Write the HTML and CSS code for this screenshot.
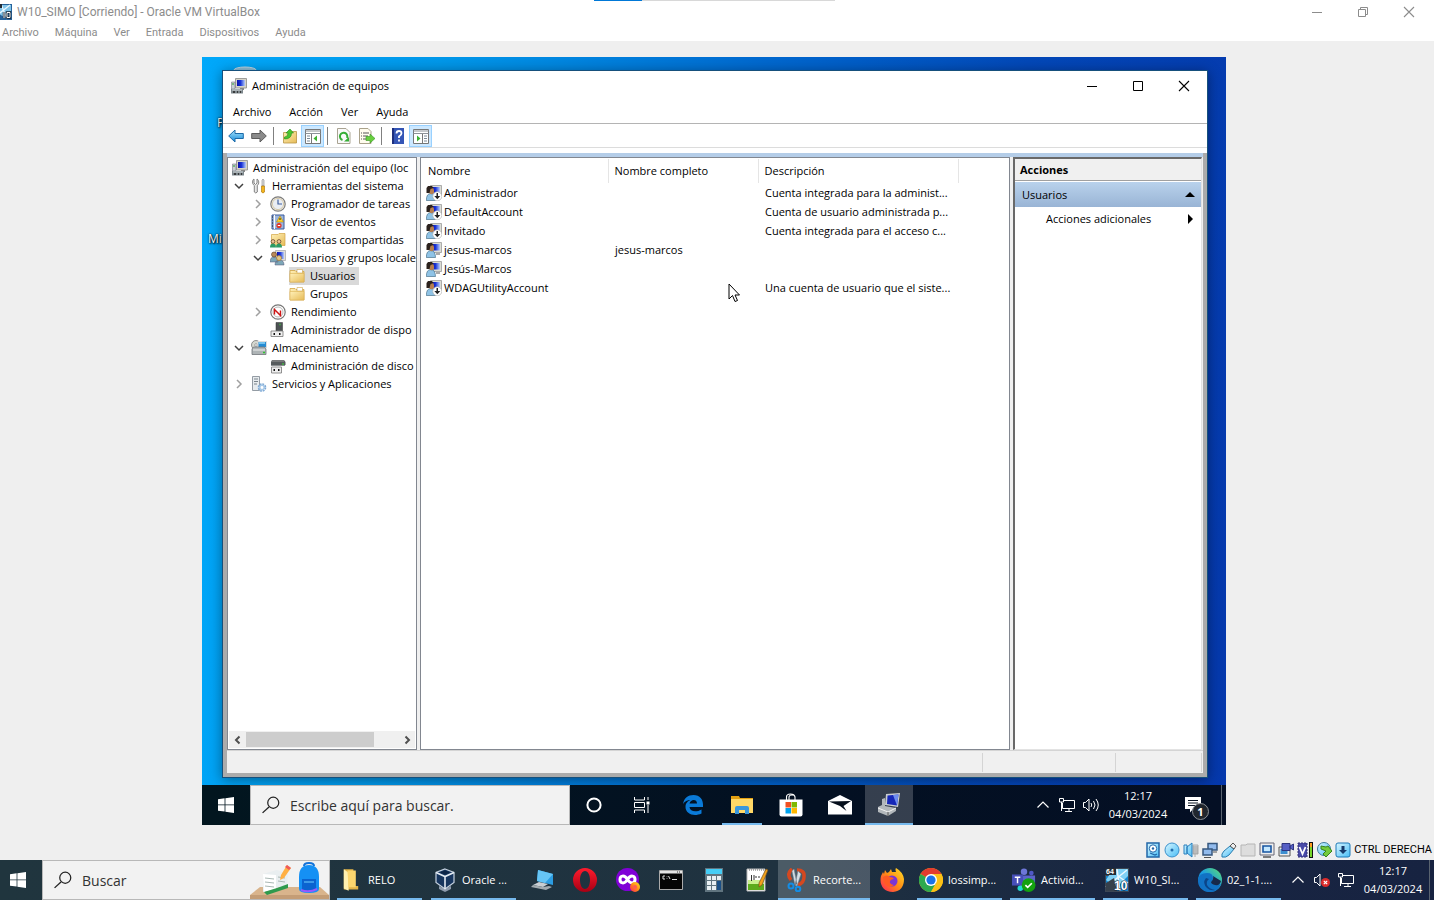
FILE: index.html
```html
<!DOCTYPE html>
<html lang="es">
<head>
<meta charset="utf-8">
<title>W10_SIMO [Corriendo] - Oracle VM VirtualBox</title>
<link rel="stylesheet" href="styles.css">
</head>
<body>
<svg class="sprite" aria-hidden="true">
  <defs>
    <linearGradient id="g-screen" x1="0" y1="0" x2="1" y2="0"><stop offset="0" stop-color="#0a10a8"/><stop offset=".45" stop-color="#1a35d8"/><stop offset="1" stop-color="#b8ccf8"/></linearGradient>
    <linearGradient id="g-fold" x1="0" y1="0" x2="1" y2="1"><stop offset="0" stop-color="#fff0b8"/><stop offset="1" stop-color="#e6bb58"/></linearGradient>
    <linearGradient id="g-blue" x1="0" y1="0" x2="0" y2="1"><stop offset="0" stop-color="#a8e4fc"/><stop offset="1" stop-color="#1488d8"/></linearGradient>
    <linearGradient id="g-cyan" x1="0" y1="0" x2="1" y2="1"><stop offset="0" stop-color="#d8f6ff"/><stop offset="1" stop-color="#48bdf6"/></linearGradient>
    <linearGradient id="g-edge" x1="0" y1="1" x2="1" y2="0"><stop offset="0" stop-color="#0c59a4"/><stop offset=".5" stop-color="#1b9de2"/><stop offset="1" stop-color="#5fe06a"/></linearGradient>
    <linearGradient id="g-ff" x1="1" y1="0" x2="0" y2="1"><stop offset="0" stop-color="#ffe226"/><stop offset=".5" stop-color="#ff8a16"/><stop offset="1" stop-color="#ff1f5a"/></linearGradient>
    <linearGradient id="g-opera" x1="0" y1="0" x2="0" y2="1"><stop offset="0" stop-color="#ff1b2d"/><stop offset="1" stop-color="#a70014"/></linearGradient>
  </defs>
  <symbol id="i-mmc" viewBox="0 0 16 16"><path d="M4.500.500h11v9.500h-11z" fill="#d6d4c8" stroke="#8a8a88" stroke-width=".8"/><path d="M6 2h8v6H6z" fill="url(#g-screen)"/><path d="M9 10h4v2H9z" fill="#888"/><path d="M.5 4h3.500v7H.5z" fill="#c9d0d4" stroke="#778" stroke-width=".6"/><path d="M1 6h2" stroke="#2aa02a"/><path d="M0 11h12v4.500H0z" fill="#7d878c"/><path d="M1 12h10" stroke="#d7dde0"/><path d="M2 14h2m2 0h1m2 0h1" stroke="#222" stroke-width="1.500"/></symbol>
  <symbol id="i-tools" viewBox="0 0 16 16"><path d="M3 1v4l1.500 1.500L6 5V1c2 1 2.500 5 .3 6.500V14q-1.500 2-3 0V7.500C1 6 1 2 3 1z" fill="#e6e6e6" stroke="#777" stroke-width=".9"/><path d="M12 1l1 1v6h-2V2z" fill="#ddd" stroke="#888" stroke-width=".6"/><path d="M10.500 8h3v6q-1.500 2-3 0z" fill="#f3b61e" stroke="#a66d00" stroke-width=".6"/></symbol>
  <symbol id="i-clock" viewBox="0 0 16 16"><circle cx="8" cy="8" r="7.200" fill="#f7f3e8" stroke="#7c7c7c" stroke-width="1.200"/><circle cx="8" cy="8" r="5.600" fill="#e9edf3" stroke="#c7b78f" stroke-width=".7"/><path d="M8 3.500V8h4" stroke="#4060a0" fill="none" stroke-width="1.200"/></symbol>
  <symbol id="i-log" viewBox="0 0 16 16"><path d="M2 1h12v14H2z" fill="#9db6de" stroke="#3a5a9a"/><path d="M4.500 1v14" stroke="#fff"/><path d="M2 3h1m-1 3h1m-1 3h1m-1 3h1" stroke="#222"/><path d="M10 2l3.500 6h-7z" fill="#ffd52a" stroke="#a67800" stroke-width=".5"/><path d="M10 4v2" stroke="#222"/><circle cx="9" cy="11.500" r="2.600" fill="#e23a2a"/><path d="M7.800 11.500h2.400" stroke="#fff"/></symbol>
  <symbol id="i-shared" viewBox="0 0 16 16"><path d="M1.500 2.500H8l1-1h6v12H1.500z" fill="url(#g-fold)" stroke="#d2a545" stroke-width=".7"/><path d="M0 15.500q0-4 3-4t3 4zM6 15.500q0-4 3-4t3 4z" fill="#2c9a66"/><circle cx="3" cy="9.500" r="1.900" fill="#f0c69a" stroke="#53351c" stroke-width=".7"/><circle cx="9" cy="9.500" r="1.900" fill="#f0c69a" stroke="#53351c" stroke-width=".7"/></symbol>
  <symbol id="i-users" viewBox="0 0 16 16"><path d="M5.500.500H15.500v10h-10z" fill="#ddd" stroke="#999" stroke-width=".6"/><path d="M7 2h7v7H7z" fill="url(#g-screen)"/><path d="M0 12q0-5 4-5t4 5zM5 15q0-5 4.500-5t4.500 5z" fill="#7da7b8" stroke="#557" stroke-width=".5"/><circle cx="4" cy="4.500" r="2.500" fill="#b88958" stroke="#5b3a20" stroke-width=".6"/><circle cx="9" cy="8" r="2.500" fill="#e2c688" stroke="#a67a28" stroke-width=".7"/></symbol>
  <symbol id="i-folder" viewBox="0 0 16 16"><path d="M1 2.500h5l1 1h8v10.500H1z" fill="url(#g-fold)" stroke="#d2a545" stroke-width=".8"/><path d="M8 1.500h5.500V5H8z" fill="#fff" stroke="#cda44b" stroke-width=".6"/><path d="M1 5.500h14V14H1z" fill="url(#g-fold)" stroke="#dcb458" stroke-width=".6"/></symbol>
  <symbol id="i-perf" viewBox="0 0 16 16"><circle cx="8" cy="8" r="7.200" fill="#fff" stroke="#777" stroke-width="1.200"/><circle cx="8" cy="8" r="5" fill="none" stroke="#b8b8b8"/><path d="M4.500 10.500v-5l6 6V6.500" stroke="#cf1515" stroke-width="1.400" fill="none"/></symbol>
  <symbol id="i-device" viewBox="0 0 16 16"><path d="M6 .5h6.500v9H6z" fill="#4d5254" stroke="#333" stroke-width=".5"/><path d="M9.500 2.500h1" stroke="#3ce03c" stroke-width="1.500"/><path d="M1 9h12v5.500H1z" fill="#eee" stroke="#777" stroke-width=".8"/><path d="M3.500 12H5m4 0h1.500" stroke="#111" stroke-width="2"/></symbol>
  <symbol id="i-store" viewBox="0 0 16 16"><circle cx="5" cy="5" r="4.500" fill="#d5d8d0" stroke="#777" stroke-width=".8"/><circle cx="5" cy="5" r="1.300" fill="#fff" stroke="#777" stroke-width=".6"/><path d="M7 1.500h8.500v6H7z" fill="#248bd2" stroke="#ddd"/><path d="M8 3h6" stroke="#8ed5f7" stroke-width="1.500"/><path d="M1 9l1.500-2h11L15 9v5.500H1z" fill="#aeb4b6" stroke="#707578" stroke-width=".8"/><path d="M2 10h12" stroke="#eee"/><path d="M12 12.500h2" stroke="#2fc52f" stroke-width="1.500"/></symbol>
  <symbol id="i-disk" viewBox="0 0 16 16"><path d="M2 2h12l1.500 2v3H1V4z" fill="#565b5d"/><path d="M2 3h12" stroke="#999"/><path d="M12 6h2" stroke="#38e038"/><path d="M1.500 9h10v6h-10z" fill="#eee" stroke="#777" stroke-width=".8"/><path d="M3.500 12H5m3 0h1.500" stroke="#111" stroke-width="2"/><path d="M1 7.500h14" stroke="#8b8f91"/></symbol>
  <symbol id="i-services" viewBox="0 0 16 16"><path d="M1.500.5h7v14h-7z" fill="#e7ebee" stroke="#89929a" stroke-width=".9"/><path d="M3 3h4M3 5.500h4M3 8h3" stroke="#7b858d"/><circle cx="11" cy="11.500" r="3.200" fill="none" stroke="#7ea9d5" stroke-width="2.200" stroke-dasharray="1.700 .8"/><circle cx="11" cy="11.500" r="2.200" fill="none" stroke="#a8c9e8" stroke-width="1.500"/></symbol>
  <symbol id="i-user" viewBox="0 0 16 16"><path d="M4.500.500h11v10h-11z" fill="#dcdcd4" stroke="#9b9b9b" stroke-width=".8"/><path d="M6 2h8v6.500H6z" fill="url(#g-screen)"/><path d="M10 11h4v2h-4z" fill="#aaa"/><path d="M.3 15.500q0-7 4.500-7t4.700 7z" fill="#8fc3e6" stroke="#365f7b" stroke-width=".6"/><path d="M1.500 6q0-4 3-4T8 5v2.500q-1.500 2.500-3.500 1.500T1.500 6z" fill="#b77f50"/><path d="M.5 8V3L2 1h4l1.500 2L4.500 4 3.500 8z" fill="#2b211d"/></symbol>
  <symbol id="i-user-off" viewBox="0 0 16 16"><use href="#i-user"/><circle cx="11.300" cy="11.300" r="4.500" fill="#fff" stroke="#aaa" stroke-width=".6"/><path d="M10.500 8h1.500v3h2.300l-3 3.300-3-3.300h2.200z" fill="#222"/></symbol>
  <symbol id="i-down" viewBox="0 0 10 10"><path d="M1 3l4 4 4-4" fill="none" stroke="#404040" stroke-width="1.500"/></symbol>
  <symbol id="i-right" viewBox="0 0 10 10"><path d="M3 1l4 4-4 4" fill="none" stroke="currentColor" stroke-width="1.500"/></symbol>
  <symbol id="i-left" viewBox="0 0 10 10"><path d="M6.500 1.500L3 5l3.500 3.500" fill="none" stroke="currentColor" stroke-width="2"/></symbol>
  <symbol id="i-min" viewBox="0 0 12 12"><path d="M1 6.500h10" stroke="currentColor"/></symbol>
  <symbol id="i-max" viewBox="0 0 12 12"><path d="M1.500 1.500h9v9h-9z" fill="none" stroke="currentColor"/></symbol>
  <symbol id="i-restore" viewBox="0 0 12 12"><path d="M1.500 3.500h7v7h-7zM3.500 3V1.500h7v7H9" fill="none" stroke="currentColor"/></symbol>
  <symbol id="i-close" viewBox="0 0 12 12"><path d="M1 1l10 10M11 1L1 11" fill="none" stroke="currentColor" stroke-width="1.100"/></symbol>
  <symbol id="i-back" viewBox="0 0 16 16"><path d="M.7 8L7 2v3.500h8.300v5H7V14z" fill="url(#g-blue)" stroke="#1c6aa8"/></symbol>
  <symbol id="i-fwd" viewBox="0 0 16 16"><path d="M15.300 8L9 2v3.500H.7v5H9V14z" fill="#8b8b8b" stroke="#5d5d5d"/></symbol>
  <symbol id="i-up" viewBox="0 0 16 16"><path d="M1.500 4.500h5l1.500-1h6.500v11.500h-13z" fill="url(#g-fold)" stroke="#b89445" stroke-width=".8"/><path d="M2.500 9q3.500 0 3.500-4H4l4-4 3.500 4h-2q0 6-7 6z" fill="#4bc52f" stroke="#208a18" stroke-width=".6"/></symbol>
  <symbol id="i-tree" viewBox="0 0 16 16"><path d="M.5 1.500h15v14H.5z" fill="#fff" stroke="#777"/><path d="M.5 3h15M.5 5.500h15" stroke="#8c9298"/><path d="M2 8h3M2 10.500h3M2 13h3" stroke="#7d8b98"/><path d="M6.500 6v9" stroke="#777"/><path d="M12 7.500v6L8.500 10.500z" fill="#3cb230"/></symbol>
  <symbol id="i-act" viewBox="0 0 16 16"><path d="M.5 1.500h15v14H.5z" fill="#fff" stroke="#777"/><path d="M.5 3h15M.5 5.500h15" stroke="#8c9298"/><path d="M11 8h3m-3 2.500h3M11 13h3" stroke="#7d8b98"/><path d="M9.500 6v9" stroke="#777"/><path d="M4 7.500v6l3.500-3z" fill="#3cb230"/></symbol>
  <symbol id="i-refresh" viewBox="0 0 16 16"><path d="M1.500.5H10l4 4v11H1.500z" fill="#fafafa" stroke="#a9a392"/><path d="M6.500 12A3.700 3.700 0 1 1 11 10" fill="none" stroke="#36ad36" stroke-width="2"/><path d="M13 9v4.500H8z" fill="#36ad36"/></symbol>
  <symbol id="i-export" viewBox="0 0 16 16"><path d="M.5.5H9l3 3v12H.5z" fill="#fffcee" stroke="#aaa28b"/><path d="M2 5h1m1 0h6M2 8h1m1 0h5M2 11h1m1 0h5" stroke="#555"/><path d="M7 8.500h4V6l5 4.500-5 4.500v-2.500H7z" fill="#68cf3e" stroke="#369422" stroke-width=".6"/></symbol>
  <symbol id="i-help" viewBox="0 0 16 16"><path d="M2 0h12v16H2z" fill="#3455b5"/><path d="M2 0h2v16H2z" fill="#1d2f7e"/><path d="M6.500 5.500q0-2.500 2.500-2.500t2.500 2.200Q11.500 7 9 8.500V10M9 11.500v2" fill="none" stroke="#fff" stroke-width="1.800"/></symbol>
  <symbol id="i-win" viewBox="0 0 16 16"><path d="M0 2.200L6.600 1.300v6.200H0zM7.400 1.200L16 0v7.500H7.400zM0 8.300h6.600v6.300L0 13.700zM7.400 8.300H16V16l-8.600-1.200z" fill="#fff"/></symbol>
  <symbol id="i-search" viewBox="0 0 16 16"><circle cx="10" cy="6" r="4.900" fill="none" stroke="#222" stroke-width="1.100"/><path d="M6.200 9.800L.5 15" stroke="#222" stroke-width="1.200"/></symbol>
  <symbol id="i-cortana" viewBox="0 0 16 16"><circle cx="8" cy="8" r="6.600" fill="none" stroke="#fff" stroke-width="2"/></symbol>
  <symbol id="i-taskview" viewBox="0 0 16 16"><path d="M.5 0v3h10V0M.5 16v-3h10v3M.5 5.500h10v5H.5zM14 0v3m0 5v8" fill="none" stroke="#fff"/><path d="M12.500 4.500h3v3h-3z" fill="#fff"/></symbol>
  <symbol id="i-edgeold" viewBox="0 0 20 20"><path d="M0 9C1 3 5 0 10.500 0 17 0 20 4.500 20 9.500V12H6.500c.5 5 7 5.500 12 2.500v4C11 22 2.500 19 2.500 12c0-4 2.500-6 5-7C4.500 5 1.500 6.500 0 9zm6.500-.5H14C14 3.500 7.500 4 6.500 8.500z" fill="#0a7ad8"/></symbol>
  <symbol id="i-explorer" viewBox="0 0 22 18"><path d="M0 0h8l1 2h13v4H0z" fill="#e4a112"/><path d="M0 3h22v14H0z" fill="#ffd867"/><path d="M4 18v-6q0-2 2-2h10q2 0 2 2v6h-4v-4H8v4z" fill="#3a97dc"/></symbol>
  <symbol id="i-shop" viewBox="0 0 24 24"><path d="M7.500 7V4q0-3 4-3t4.500 3v3M10 7V4q0-2 3-2t3 2v3" fill="none" stroke="#fff" stroke-width="1.100"/><path d="M.5 6.500h23v15q0 2-2 2h-19q-2 0-2-2z" fill="#fff"/><path d="M6.500 9H12v5.500H6.500z" fill="#f05022"/><path d="M12.500 9H18v5.500h-5.500z" fill="#7eb900"/><path d="M6.500 15H12v5.500H6.500z" fill="#00a3ee"/><path d="M12.500 15H18v5.500h-5.500z" fill="#ffb800"/></symbol>
  <symbol id="i-mail" viewBox="0 0 24 20"><path d="M12 0l12 6v13.500H0V6z" fill="#fff"/><path d="M1 6.500l22-.5L15.500 11l3 5-6.500-5z" fill="#050f1c"/></symbol>
  <symbol id="i-pc" viewBox="0 0 24 24"><path d="M9 1l14-1-2 14-13-2z" fill="#c8ccd0"/><path d="M10.500 2.500L21.500 1.500 20 12.500l-10-1.500z" fill="#1527b8"/><path d="M16 2l5.500-.5L20 12.500z" fill="#6d8cf0"/><path d="M1 14l4-2V6l3-1v8l11 2v3l-8 5-10-4z" fill="#b3b8bc"/><path d="M1 15l10 4 8-4" stroke="#f2f2f2" fill="none"/><path d="M11 19v4" stroke="#555"/></symbol>
  <symbol id="i-chev" viewBox="0 0 12 12"><path d="M.5 8.500L6 3l5.500 5.500" fill="none" stroke="#fff" stroke-width="1.200"/></symbol>
  <symbol id="i-net" viewBox="0 0 16 14"><path d="M5 2.500h10.500v8H3.500V5M10 10.500v3M6 13.500h7M.5.500h4v3.500h-4zM2.500 4v9" fill="none" stroke="#fff"/></symbol>
  <symbol id="i-vol" viewBox="0 0 16 14"><path d="M.5 4.500h2L6 1v12L2.500 9.500h-2zM8 5q1.500 2 0 4M10.500 3q3 4 0 8M13 1q4.500 6 0 12" fill="none" stroke="#fff"/></symbol>
  <symbol id="i-mute" viewBox="0 0 16 14"><path d="M.5 4.500h2L6 1v12L2.500 9.500h-2z" fill="none" stroke="#fff"/><circle cx="11.500" cy="9.500" r="4.500" fill="#da2b2b"/><path d="M9.800 7.800l3.400 3.400m0-3.400l-3.400 3.400" stroke="#fff" stroke-width="1.200"/></symbol>
  <symbol id="i-note" viewBox="0 0 16 16"><path d="M0 0h16v12H8l-3 3.500V12H0z" fill="#fff"/><path d="M3 3.500h10M3 6h10M3 8.500h10" stroke="#091423"/></symbol>
  <symbol id="i-vbox" viewBox="0 0 20 24"><path d="M4 18l6 3 6-3v3l-6 3-6-3z" fill="#8d9bad"/><path d="M10 1l9 3.500v10L10 21l-9-6.500v-10z" fill="#17365f" stroke="#c6d2e0" stroke-width="1.200"/><path d="M1 4.500l9 4 9-4M10 8.500V21" stroke="#e4ecf4" stroke-width="1.600" fill="none"/><path d="M5 4.500L10 2.500l5 2-5 2z" fill="#0c2547"/></symbol>
  <symbol id="i-vm-small" viewBox="0 0 16 16"><path d="M0 0h16v16H0z" fill="#27639b"/><path d="M4 1h11v6L8 13 0 8z" fill="#7fc3e8"/><path d="M5 0l6 15M0 12L14 1" stroke="#eaf8ff" stroke-width="1.300"/><path d="M0 0h6v4H0z" fill="#222b35"/><path d="M8 8v6M11 8.500h3v5h-3z" stroke="#123" stroke-width="2.400" fill="none"/><path d="M8 8v6M11 8.500h3v5h-3z" stroke="#fff" stroke-width="1" fill="none"/></symbol>
  <symbol id="i-vm" viewBox="0 0 24 24"><path d="M0 0h24v24H0z" fill="#3c4654"/><path d="M1 8h22v15H1z" fill="#1586cf"/><path d="M8 1h15v7L11 20 1 12z" fill="#7fd0f5"/><path d="M12 1l3 22M1 19L22 2M13 8l10 7" stroke="#eaf8ff" stroke-width="1.500"/><path d="M1 15l8-5 3 13H1z" fill="#36404c"/><path d="M0 0h11v7H0z" fill="#222b35"/><text x="1" y="6" class="vm64">64</text><text x="9" y="22" class="vm10">10</text></symbol>
  <symbol id="i-relo" viewBox="0 0 16 20"><path d="M2 1h8v14h4v3H2z" fill="#e2b448"/><path d="M2 1l4 3v15l-4-2z" fill="#fff0b0"/><path d="M5 2h7v14H6z" fill="#fbd66e"/></symbol>
  <symbol id="i-rdp" viewBox="0 0 24 22"><path d="M8 1l15 4v11L7 12z" fill="#2c9de2"/><path d="M8 1l15 4-8 9-8-2z" fill="#66c5f5"/><path d="M9 13l9 2-5 3-10-2z" fill="#c8ced2"/><path d="M3 16l10 2 6-1 3 1-6 3-15-3z" fill="#a2abb0"/></symbol>
  <symbol id="i-opera" viewBox="0 0 24 24"><path fill-rule="evenodd" d="M12 0a12 12 0 1 0 0 24 12 12 0 0 0 0-24zm0 3c3 0 5 4 5 9s-2 9-5 9-5-4-5-9 2-9 5-9z" fill="url(#g-opera)"/></symbol>
  <symbol id="i-inf" viewBox="0 0 24 24"><circle cx="11.500" cy="11.500" r="11.500" fill="#8000d7"/><path d="M11.500 11.500C8 6 4 8 4 11.500s4 5.500 7.500 0 7.500-3.500 7.500 0-4 5.500-7.500 0" fill="none" stroke="#fff" stroke-width="3"/><circle cx="19" cy="19" r="5" fill="url(#g-ff)"/><circle cx="19" cy="19" r="2" fill="#ff5b54"/></symbol>
  <symbol id="i-cmd" viewBox="0 0 24 20"><path d="M.5.5h23v19H.5z" fill="#050505" stroke="#aaa"/><path d="M1 1h22v2.500H1z" fill="#e5e5e5"/><path d="M18 2h1m1 0h1" stroke="#333"/><path d="M6 6H4v3h2M8 6.500v.6m0 1v.6M9.500 6l1.500 3M13 9.500h5" fill="none" stroke="#ddd"/></symbol>
  <symbol id="i-calc" viewBox="0 0 18 24"><path d="M0 0h18v24H0z" fill="#60747f"/><path d="M1 1h16v5H1z" fill="#45cdf5"/><path d="M2 8h4v4H2zm5 0h4v4H7zm5 0h4v4h-4zM2 13h4v4H2zm5 0h4v4H7zM2 18h4v4H2zm5 0h4v4H7z" fill="#e8eff3"/><path d="M12 13h4v9h-4z" fill="#1a4f86"/></symbol>
  <symbol id="i-edit" viewBox="0 0 22 24"><path d="M1 1h18v22H1z" fill="#fff" stroke="#bbb"/><path d="M2 13h16v9H2z" fill="#5cab1c"/><path d="M2 12h16v4H2z" fill="#caf08f"/><path d="M3 2h15" stroke="#666" stroke-dasharray="1 1"/><path d="M5.500 7v6m2.500-6v5m1-3h2m1 0h2" stroke="#333"/><path d="M20 1l2 1-6 15-3 2v-4z" fill="#f2a21d" stroke="#765020" stroke-width=".7"/></symbol>
  <symbol id="i-snip" viewBox="0 0 20 24"><path d="M11 2Q19 2 18 9q0 6-6 8" fill="none" stroke="#d54820" stroke-width="3.500"/><path d="M6 1q-6 5-1 11" fill="none" stroke="#d54820" stroke-width="3.500"/><path d="M8 1l3 15-2 1-3-14zM12 3l-3 14 2 1 4-12z" fill="#d5dce2" stroke="#758393" stroke-width=".5"/><circle cx="5" cy="18" r="2.500" fill="none" stroke="#148de5" stroke-width="2"/><circle cx="12" cy="21" r="2.300" fill="none" stroke="#148de5" stroke-width="2"/></symbol>
  <symbol id="i-firefox" viewBox="0 0 24 24"><path d="M9 4l2-3 1 3 4 0q-1-3 0-4 7 4 8 11 0 12-11 13C3 24-1 16 1 8l2-4 1 2 1-4 2 3z" fill="url(#g-ff)"/><circle cx="12" cy="13" r="5.500" fill="#7a35d5"/><path d="M3 9q4-3 7 0 3 0 4 2-3 0-4 2-1 3 4 4-5 4-9-1-2-3-2-7z" fill="#ff5b24"/></symbol>
  <symbol id="i-chrome" viewBox="0 0 24 24"><circle cx="12" cy="12" r="12" fill="#fbc116"/><path d="M12 12L1.600 6A12 12 0 0 1 22.400 6H12z" fill="#e33b2e"/><path d="M12 12L1.600 6A12 12 0 0 0 12 24l5-9z" fill="#2da94f"/><path d="M12 6h10.400A12 12 0 0 1 12 24l5.200-9z" fill="#fbc116"/><circle cx="12" cy="12" r="6" fill="#fff"/><circle cx="12" cy="12" r="4.600" fill="#1a73e8"/></symbol>
  <symbol id="i-teams" viewBox="0 0 26 26"><circle cx="13" cy="4" r="3.500" fill="#6d76d8"/><circle cx="21" cy="5.500" r="2.500" fill="#5059c9"/><path d="M8 8h17v8q0 7-7 8-8 0-10-8z" fill="#5c64cb"/><path d="M0 7h12v12H0z" fill="#464eb8"/><path d="M3 10h6M6 10v6.500" stroke="#fff" stroke-width="1.600"/><circle cx="9" cy="22" r="3" fill="#20d8d0"/><circle cx="18" cy="18.500" r="7.500" fill="#13a10e"/><path d="M14.500 18.500l2.500 2.500 4.500-4.500" fill="none" stroke="#fff" stroke-width="1.800"/></symbol>
  <symbol id="i-edge" viewBox="0 0 24 24"><circle cx="12" cy="12" r="12" fill="url(#g-edge)"/><path d="M0 12q1-7 9-7 6 0 6 5 0 3-2 4 2 4 10 2-4 9-13 8Q0 22 0 12z" fill="#1172c4"/><path d="M8 10q-4 5 1 10 3 3 8 2-6-1-8-5-1-4 2-6z" fill="#0b4589"/><path d="M13 14q3-3 2-6l8 5q-1 5-6 4-4-1-4-3z" fill="#17294a"/></symbol>
  <symbol id="i-hdd" viewBox="0 0 16 16"><path d="M2 1h12v14H2z" fill="url(#g-cyan)" stroke="#2267a8" stroke-width="1.500"/><circle cx="8" cy="6.500" r="3.700" fill="#fff" stroke="#2267a8"/><circle cx="8" cy="6.500" r="1.200" fill="#2267a8"/><path d="M5 11l5 2 2-1" fill="none" stroke="#2267a8" stroke-width="1.300"/></symbol>
  <symbol id="i-cd" viewBox="0 0 16 16"><circle cx="8" cy="8" r="7" fill="url(#g-cyan)" stroke="#3b91cc"/><circle cx="8" cy="8" r="1.500" fill="#236ead"/></symbol>
  <symbol id="i-audio" viewBox="0 0 16 16"><path d="M10 3h5v9h-5zM12 12v3" fill="#ddd" stroke="#aaa"/><path d="M10 5h5m-5 2h5m-5 2h5m-5 2h5" stroke="#999"/><path d="M1 3h3v9H1zM4 5l5-4v14l-5-4z" fill="url(#g-cyan)" stroke="#287fbd"/></symbol>
  <symbol id="i-lan" viewBox="0 0 16 16"><path d="M6 1.500h9v6.500H6z" fill="#92bbed" stroke="#37587f" stroke-width="1.500"/><path d="M1 7h9v6H1z" fill="#92bbed" stroke="#37587f" stroke-width="1.500"/><path d="M11 10h4M2 15.500h7" stroke="#555"/></symbol>
  <symbol id="i-usb" viewBox="0 0 16 16"><path d="M1 15q-1-3 2-6l6-5 4 3-5 6q-3 3-7 2z" fill="url(#g-cyan)" stroke="#297caf"/><path d="M9 4l3-3 3 3-2 3z" fill="#eee" stroke="#555"/></symbol>
  <symbol id="i-share" viewBox="0 0 16 16"><path d="M1 3h5l1-1h8v12H1z" fill="#ddd" stroke="#b5b5b5"/></symbol>
  <symbol id="i-disp" viewBox="0 0 16 16"><path d="M1 1h14v12H1z" fill="#eee" stroke="#667"/><path d="M4 4h8v6H4z" fill="#c5e8ff" stroke="#1755a2" stroke-width="1.600"/><path d="M4 15h8" stroke="#555" stroke-width="1.500"/></symbol>
  <symbol id="i-rec" viewBox="0 0 16 16"><path d="M1 5h11v9H1z" fill="#eee" stroke="#555"/><path d="M2.500 7h7v5h-7z" fill="#3d8fd0"/><path d="M4 1.500h8v7H4zM12 4l3.500-2v6L12 6z" fill="#565fc5" stroke="#2f3580"/></symbol>
  <symbol id="i-cpu" viewBox="0 0 16 16"><path d="M1 1h9v14H1z" fill="#4a4ba8" stroke="#343379" stroke-dasharray="2 1"/><path d="M2.500 5L5.500 12 8.500 5" fill="none" stroke="#fff" stroke-width="1.800"/><path d="M12 0h4v16h-4z" fill="#111"/><path d="M13 1h2v6h-2z" fill="#ff9b20"/><path d="M13 5h2v10h-2z" fill="#76d62a"/></symbol>
  <symbol id="i-mouse" viewBox="0 0 16 16"><circle cx="8" cy="7" r="6.500" fill="url(#g-cyan)" stroke="#3d7b9c"/><path d="M5 4l5 1 2-1 4 5-6 6-3-3 3-3-5-2z" fill="#73ca3c" stroke="#37831e"/></symbol>
  <symbol id="i-host" viewBox="0 0 16 16"><rect x="1" y="1" width="14" height="14" rx="2" fill="url(#g-cyan)" stroke="#1d79b7"/><path d="M6.500 4h3v4H12l-4 4-4-4h2.500z" fill="#163a6b"/></symbol>
  <symbol id="i-bin" viewBox="0 0 32 32"><ellipse cx="16" cy="4" rx="11" ry="3" fill="#8ebfd9" stroke="#bfd8e4"/></symbol>
  <symbol id="i-cursor" viewBox="0 0 12 20"><path d="M1 1v15l3.500-3.500L7 18.500l2.500-1L7 12h4.500z" fill="#fff" stroke="#000"/></symbol>
</svg>

<div class="host">
  <div class="host-progress"></div>
  <header class="host-title">
    <svg class="ic16 host-logo"><use href="#i-vm-small"/></svg>
    <span>W10_SIMO [Corriendo] - Oracle VM VirtualBox</span>
    <div class="win-controls host-controls">
      <button aria-label="Minimizar"><svg class="ic12"><use href="#i-min"/></svg></button>
      <button aria-label="Restaurar"><svg class="ic12"><use href="#i-restore"/></svg></button>
      <button aria-label="Cerrar"><svg class="ic12"><use href="#i-close"/></svg></button>
    </div>
  </header>
  <nav class="host-menu"><button>Archivo</button><button>Máquina</button><button>Ver</button><button>Entrada</button><button>Dispositivos</button><button>Ayuda</button></nav>

  <main class="vm-area">
    <div class="guest">
      <div class="desktop">
        <svg class="desk-bin"><use href="#i-bin"/></svg>
        <span class="desk-label desk-label-bin">P</span>
        <span class="desk-label desk-label-edge">Mi</span>

        <section class="window">
          <header class="title">
            <svg class="ic16"><use href="#i-mmc"/></svg><span>Administración de equipos</span>
            <div class="win-controls">
              <button aria-label="Minimizar"><svg class="ic12"><use href="#i-min"/></svg></button>
              <button aria-label="Maximizar"><svg class="ic12"><use href="#i-max"/></svg></button>
              <button aria-label="Cerrar"><svg class="ic12"><use href="#i-close"/></svg></button>
            </div>
          </header>
          <nav class="menu"><button>Archivo</button><button>Acción</button><button>Ver</button><button>Ayuda</button></nav>
          <div class="toolbar">
            <button aria-label="Atrás"><svg class="ic16"><use href="#i-back"/></svg></button>
            <button aria-label="Adelante"><svg class="ic16"><use href="#i-fwd"/></svg></button>
            <i class="sep"></i>
            <button aria-label="Subir"><svg class="ic16"><use href="#i-up"/></svg></button>
            <button class="on" aria-label="Árbol"><svg class="ic16"><use href="#i-tree"/></svg></button>
            <i class="sep"></i>
            <button aria-label="Actualizar"><svg class="ic16"><use href="#i-refresh"/></svg></button>
            <button aria-label="Exportar"><svg class="ic16"><use href="#i-export"/></svg></button>
            <i class="sep"></i>
            <button aria-label="Ayuda"><svg class="ic16"><use href="#i-help"/></svg></button>
            <button class="on" aria-label="Panel"><svg class="ic16"><use href="#i-act"/></svg></button>
          </div>
          <div class="frame">
            <div class="panes">
              <div class="tree">
                <ul>
                  <li class="l0"><span class="node"><svg class="ic16"><use href="#i-mmc"/></svg>Administración del equipo (loc</span></li>
                  <li class="l1"><svg class="tw"><use href="#i-down"/></svg><span class="node"><svg class="ic16"><use href="#i-tools"/></svg>Herramientas del sistema</span></li>
                  <li class="l2"><svg class="tw"><use href="#i-right"/></svg><span class="node"><svg class="ic16"><use href="#i-clock"/></svg>Programador de tareas</span></li>
                  <li class="l2"><svg class="tw"><use href="#i-right"/></svg><span class="node"><svg class="ic16"><use href="#i-log"/></svg>Visor de eventos</span></li>
                  <li class="l2"><svg class="tw"><use href="#i-right"/></svg><span class="node"><svg class="ic16"><use href="#i-shared"/></svg>Carpetas compartidas</span></li>
                  <li class="l2"><svg class="tw"><use href="#i-down"/></svg><span class="node"><svg class="ic16"><use href="#i-users"/></svg>Usuarios y grupos locale</span></li>
                  <li class="l3"><svg class="tw"></svg><span class="node selected"><svg class="ic16"><use href="#i-folder"/></svg>Usuarios</span></li>
                  <li class="l3"><svg class="tw"></svg><span class="node"><svg class="ic16"><use href="#i-folder"/></svg>Grupos</span></li>
                  <li class="l2"><svg class="tw"><use href="#i-right"/></svg><span class="node"><svg class="ic16"><use href="#i-perf"/></svg>Rendimiento</span></li>
                  <li class="l2"><svg class="tw"></svg><span class="node"><svg class="ic16"><use href="#i-device"/></svg>Administrador de dispo</span></li>
                  <li class="l1"><svg class="tw"><use href="#i-down"/></svg><span class="node"><svg class="ic16"><use href="#i-store"/></svg>Almacenamiento</span></li>
                  <li class="l2"><svg class="tw"></svg><span class="node"><svg class="ic16"><use href="#i-disk"/></svg>Administración de disco</span></li>
                  <li class="l1"><svg class="tw"><use href="#i-right"/></svg><span class="node"><svg class="ic16"><use href="#i-services"/></svg>Servicios y Aplicaciones</span></li>
                </ul>
                <div class="hscroll">
                  <button aria-label="Izquierda"><svg class="ic10"><use href="#i-left"/></svg></button>
                  <div class="track"><div class="thumb"></div></div>
                  <button aria-label="Derecha"><svg class="ic10 flip"><use href="#i-left"/></svg></button>
                </div>
              </div>
              <div class="list">
                <table>
                  <colgroup><col class="c-name"><col class="c-full"><col class="c-desc"></colgroup>
                  <thead><tr><th>Nombre</th><th>Nombre completo</th><th>Descripción</th></tr></thead>
                  <tbody>
                    <tr><td><svg class="ic16"><use href="#i-user-off"/></svg>Administrador</td><td></td><td>Cuenta integrada para la administ...</td></tr>
                    <tr><td><svg class="ic16"><use href="#i-user-off"/></svg>DefaultAccount</td><td></td><td>Cuenta de usuario administrada p...</td></tr>
                    <tr><td><svg class="ic16"><use href="#i-user-off"/></svg>Invitado</td><td></td><td>Cuenta integrada para el acceso c...</td></tr>
                    <tr><td><svg class="ic16"><use href="#i-user"/></svg>jesus-marcos</td><td>jesus-marcos</td><td></td></tr>
                    <tr><td><svg class="ic16"><use href="#i-user"/></svg>Jesús-Marcos</td><td></td><td></td></tr>
                    <tr><td><svg class="ic16"><use href="#i-user-off"/></svg>WDAGUtilityAccount</td><td></td><td>Una cuenta de usuario que el siste...</td></tr>
                  </tbody>
                </table>
                <svg class="cursor"><use href="#i-cursor"/></svg>
              </div>
              <aside class="actions">
                <h2>Acciones</h2>
                <button class="group">Usuarios<i class="tri-up"></i></button>
                <button class="more">Acciones adicionales<i class="tri-right"></i></button>
              </aside>
            </div>
            <footer class="status"><span></span><span></span><span></span></footer>
          </div>
        </section>
      </div>

      <div class="guest-bar">
        <button class="slot" aria-label="Inicio"><svg class="ic16"><use href="#i-win"/></svg></button>
        <label class="search guest-search"><svg class="ic18"><use href="#i-search"/></svg><input type="text" aria-label="Buscar" placeholder="Escribe aquí para buscar."></label>
        <button class="slot" aria-label="Cortana"><svg class="ic16"><use href="#i-cortana"/></svg></button>
        <button class="slot" aria-label="Vista de tareas"><svg class="ic16"><use href="#i-taskview"/></svg></button>
        <div class="pinned">
          <button class="slot" aria-label="Edge"><svg class="ic20"><use href="#i-edgeold"/></svg></button>
          <button class="slot open" aria-label="Explorador"><svg class="ic22"><use href="#i-explorer"/></svg></button>
          <button class="slot" aria-label="Store"><svg class="ic24"><use href="#i-shop"/></svg></button>
          <button class="slot" aria-label="Correo"><svg class="ic24"><use href="#i-mail"/></svg></button>
          <button class="slot current" aria-label="Administración de equipos"><svg class="ic24"><use href="#i-pc"/></svg></button>
        </div>
        <div class="tray">
          <svg class="ic12 chev"><use href="#i-chev"/></svg><svg class="ic16"><use href="#i-net"/></svg><svg class="ic16"><use href="#i-vol"/></svg>
          <div class="clock"><span>12:17</span><span>04/03/2024</span></div>
          <button class="notif" aria-label="Notificaciones"><svg class="ic16"><use href="#i-note"/></svg><b>1</b></button>
          <i class="peek"></i>
        </div>
      </div>
    </div>
  </main>

  <div class="vm-status">
    <svg class="ic16"><use href="#i-hdd"/></svg><svg class="ic16"><use href="#i-cd"/></svg><svg class="ic16"><use href="#i-audio"/></svg><svg class="ic16"><use href="#i-lan"/></svg><svg class="ic16"><use href="#i-usb"/></svg><svg class="ic16"><use href="#i-share"/></svg><svg class="ic16"><use href="#i-disp"/></svg><svg class="ic16"><use href="#i-rec"/></svg><svg class="ic16"><use href="#i-cpu"/></svg><svg class="ic16"><use href="#i-mouse"/></svg><svg class="ic16"><use href="#i-host"/></svg>
    <span>CTRL DERECHA</span>
  </div>

  <footer class="host-bar">
    <button class="start" aria-label="Inicio"><svg class="ic16"><use href="#i-win"/></svg></button>
    <label class="search host-search"><svg class="ic18"><use href="#i-search"/></svg><input type="text" aria-label="Buscar" placeholder="Buscar">
      <svg class="desk-art" viewBox="0 0 79 38"><path d="M10 26h60l9 8v4H0v-4z" fill="#d9b48c"/><path d="M0 34h79v4H0z" fill="#c49d76"/><path d="M13 13l14-4 11 4-1 11-10 3-14 4z" fill="#e9eef0"/><path d="M13 13l13 1v14l-12 3z" fill="#fff"/><path d="M14 31l13-4 11-4v4l-21 7z" fill="#2e9a4d"/><path d="M15 17l9 1m-9 3l9 1m-9 3l9 1m4-10l7 1m-7 3l7 1" stroke="#a9b8b4"/><path d="M37 4l4 3-7 10-4 2 1-5z" fill="#ffb044"/><path d="M37 4l4 3-2 2-4-3z" fill="#f05a5a"/><path d="M54 5q0-3 5-3t5 3" fill="none" stroke="#1272d8" stroke-width="2"/><path d="M49 16Q49 4 59 4t10 12v12q0 4-10 4t-10-4z" fill="#1590f4"/><path d="M52 18h14v11q-7 3-14 0z" fill="#0b63d0"/><path d="M54 21h10" stroke="#6fd0ff"/><path d="M51 29q8 3 16-1" stroke="#9858ff" stroke-width="2" fill="none"/></svg>
    </label>
    <div class="tasks tasks-a">
      <button class="task open"><svg class="ic24"><use href="#i-relo"/></svg>RELO</button>
      <button class="task open"><svg class="ic24"><use href="#i-vbox"/></svg>Oracle ...</button>
    </div>
    <div class="tasks">
      <button class="pin" aria-label="Escritorio remoto"><svg class="ic24"><use href="#i-rdp"/></svg></button>
      <button class="pin" aria-label="Opera"><svg class="ic24"><use href="#i-opera"/></svg></button>
      <button class="pin" aria-label="Navegación privada"><svg class="ic24"><use href="#i-inf"/></svg></button>
      <button class="pin" aria-label="Símbolo del sistema"><svg class="ic24"><use href="#i-cmd"/></svg></button>
      <button class="pin" aria-label="Calculadora"><svg class="ic24"><use href="#i-calc"/></svg></button>
      <button class="pin" aria-label="Editor"><svg class="ic24"><use href="#i-edit"/></svg></button>
      <button class="task current"><svg class="ic24"><use href="#i-snip"/></svg>Recorte...</button>
      <button class="pin" aria-label="Firefox"><svg class="ic24"><use href="#i-firefox"/></svg></button>
    </div>
    <div class="tasks tasks-c">
      <button class="task open"><svg class="ic24"><use href="#i-chrome"/></svg>lossimp...</button>
      <button class="task open"><svg class="ic24"><use href="#i-teams"/></svg>Activid...</button>
      <button class="task open"><svg class="ic24"><use href="#i-vm"/></svg>W10_SI...</button>
      <button class="task open"><svg class="ic24"><use href="#i-edge"/></svg>02_1-1....</button>
    </div>
    <div class="tray">
      <svg class="ic12 chev"><use href="#i-chev"/></svg><svg class="ic16"><use href="#i-mute"/></svg><svg class="ic16"><use href="#i-net"/></svg>
      <div class="clock"><span>12:17</span><span>04/03/2024</span></div>
      <i class="peek"></i>
    </div>
  </footer>
</div>
</body>
</html>
```
FILE: styles.css
```css
* { box-sizing: border-box; }
body { margin: 0; background: #efefef; color: #000; font: 12px/18px "Open Sans", "Noto Sans", sans-serif; }
button { margin: 0; padding: 0; border: 0; background: none; color: inherit; font: inherit; text-align: left; white-space: nowrap; }
input { border: 0; background: none; outline: 0; padding: 0; }
svg { display: block; flex: none; }
.sprite { position: absolute; width: 0; height: 0; }
.ic10 { width: 10px; height: 10px; }
.ic12 { width: 12px; height: 12px; }
.ic16 { width: 16px; height: 16px; }
.ic18 { width: 18px; height: 18px; }
.ic20 { width: 20px; height: 20px; }
.ic22 { width: 22px; height: 22px; }
.ic24 { width: 24px; height: 24px; }
.flip { transform: rotate(180deg); }
.vm64 { font: bold 7px "Liberation Sans", sans-serif; fill: #fff; }
.vm10 { font: bold 12px "Liberation Sans", sans-serif; fill: #fff; stroke: #123; stroke-width: 1px; paint-order: stroke; }

.host { min-height: 100vh; display: flex; flex-direction: column; position: relative; }
.host-progress { position: absolute; top: 0; left: 594px; width: 241px; height: 1px; background: linear-gradient(90deg, #0078d7 48px, #d8d8d8 48px); }
.host-title { display: flex; align-items: center; height: 24px; background: #fff; color: #8c8c8c; gap: 5px; font-family: Roboto, "Open Sans", sans-serif; }
.host-logo { margin-left: -4px; }
.win-controls { display: flex; margin-left: auto; }
.win-controls button { width: 46px; height: 28px; display: grid; place-items: center; }
.host-controls { padding-right: 2px; }
.host-controls button { height: 20px; }
.host-menu { display: flex; height: 17px; padding-left: 2px; gap: 16px; background: #fff; color: #8c8c8c; font: 11px/17px Roboto, "Open Sans", sans-serif; }

.vm-area { flex: 1; display: flex; padding: 16px 208px 15px 202px; }
.guest { flex: 1; min-width: 0; display: flex; flex-direction: column; }
.desktop { flex: 1; position: relative; overflow: hidden; background: linear-gradient(95deg, #00a8fa 0%, #0098ea 22%, #0068cf 52%, #0348b8 76%, #0538ac 100%); }
.desk-bin { position: absolute; left: 27px; top: 9px; width: 32px; height: 32px; }
.desk-label { position: absolute; color: #fff; text-shadow: 1px 1px 2px #000, 0 0 2px #000; }
.desk-label-bin { left: 15px; top: 57px; }
.desk-label-edge { left: 6px; top: 173px; }

.window { position: absolute; inset: 13px 18px 7px 20px; display: flex; flex-direction: column; background: #fff; border: 1px solid #16507c; box-shadow: 0 2px 12px rgba(0, 0, 0, .4); font-size: 11px; }
.title { display: flex; align-items: center; gap: 5px; height: 29px; padding-left: 8px; }
.menu { display: flex; gap: 18px; height: 24px; padding: 3px 10px; border-bottom: 1px solid #b4b4b4; }
.menu button { line-height: 18px; }
.toolbar { display: flex; align-items: center; height: 24px; padding-left: 1px; border-bottom: 1px solid #dcdcdc; }
.toolbar button { width: 23px; height: 22px; display: grid; place-items: center; }
.toolbar .on { background: #cce8ff; border: 1px solid #99d1ff; }
.sep { width: 1px; height: 18px; margin: 0 4px 0 3px; background: #808080; }
.frame { flex: 1; min-height: 0; display: flex; flex-direction: column; margin-top: 5px; background: #f0f0f0; border: solid #ababab; border-width: 0 4px 4px; }
.panes { flex: 1; min-height: 0; display: flex; gap: 3px; padding-right: 1px; border-top: 4px solid #b4cde8; }
.tree, .list { border: 1px solid #828790; background: #fff; overflow: hidden; }
.tree { width: 190px; flex: none; display: flex; flex-direction: column; }
.tree ul { flex: 1; margin: 0; padding: 1px 0 0 4px; list-style: none; overflow: hidden; }
.tree li { display: flex; align-items: center; height: 18px; white-space: nowrap; }
.l2 { padding-left: 19px; }
.l3 { padding-left: 38px; }
.tw { width: 10px; height: 10px; margin: 0 7px 0 2px; color: #a0a0a0; }
.node { display: flex; align-items: center; gap: 5px; height: 18px; padding-right: 4px; }
.selected { background: #d9d9d9; }
.hscroll { display: flex; height: 17px; margin: 0 1px 1px; background: #f0f0f0; color: #505050; }
.hscroll button { width: 17px; display: grid; place-items: center; }
.track { flex: 1; padding: 1px 0; }
.thumb { width: 84%; height: 15px; background: #cdcdcd; }
.list { flex: 1; position: relative; padding: 1px; }
table { table-layout: fixed; width: 536px; border-collapse: collapse; }
.c-name { width: 186px; }
.c-full { width: 150px; }
.c-desc { width: 200px; }
th { height: 24px; padding: 0 6px; border-right: 1px solid #e5e5e5; font-weight: normal; text-align: left; }
td { height: 19px; padding: 0 6px 0 7px; white-space: nowrap; }
td:first-child { display: flex; align-items: center; gap: 2px; padding-left: 4px; }
.cursor { position: absolute; left: 307px; top: 125px; width: 12px; height: 20px; }
.actions { width: 189px; flex: none; display: flex; flex-direction: column; background: #fff; border: solid #696969; border-width: 2px 1px 1px 2px; border-right-color: #e3e3e3; border-bottom-color: #e3e3e3; }
.actions h2 { height: 22px; margin: 0; padding-left: 5px; font-size: 11px; line-height: 21px; background: #f0f0f0; border-bottom: 1px solid #a0a0a0; }
.actions button { display: flex; align-items: center; justify-content: space-between; padding-right: 6px; height: 23px; }
.actions .group { height: 25px; margin-top: 1px; padding-left: 7px; background: linear-gradient(#b9d2ec, #99b4d5); }
.actions .more { padding: 0 8px 0 31px; }
.tri-up { border: 5px solid transparent; border-bottom-color: #000; border-top: 0; }
.tri-right { border: 5px solid transparent; border-left-color: #000; border-right: 0; }
.status { display: flex; justify-content: flex-end; height: 23px; padding: 2px 1px 1px; border-top: 1px solid #d4d4d4; }
.status span { border-right: 1px solid #d4d4d4; width: 86px; }
.status span:nth-child(2) { width: 133px; }

.guest-bar { display: flex; height: 40px; background: linear-gradient(90deg, #02161f, #031022 60%, #040f24); color: #fff; }
.slot { width: 48px; display: grid; place-items: center; }
.pinned { display: flex; gap: 1px; margin-left: 3px; }
.open, .current { background: linear-gradient(#76b9ed, #76b9ed) bottom / 85px 2px no-repeat; }
.slot.open { background-size: 40px 2px; }
.current { background: linear-gradient(#76b9ed, #76b9ed) bottom / 100% 2px no-repeat, rgba(255, 255, 255, .2); }
.search { display: flex; align-items: center; gap: 10px; height: 40px; padding-left: 11px; background: #f2f2f2; border: 1px solid #b8b8b8; }
.search input { flex: 1; min-width: 0; height: 30px; color: #333; font: 14px "Open Sans", sans-serif; }
.search input::placeholder { color: #333; opacity: 1; }
.guest-search { width: 320px; }
.tray { display: flex; align-items: center; margin-left: auto; }
.tray > svg { margin-right: 8px; }
.tray > .chev { margin-right: 10px; }
.clock { display: flex; flex-direction: column; width: 62px; margin-right: 5px; text-align: center; font-size: 11px; line-height: 18px; white-space: nowrap; }
.notif { position: relative; margin: 0 8px 0 11px; width: 28px; }
.notif b { position: absolute; left: 7px; top: 6px; width: 17px; height: 17px; border: 1px solid #8b8f95; border-radius: 50%; background: #20262e; font-size: 11px; line-height: 15px; text-align: center; }
.peek { align-self: stretch; width: 5px; border-left: 1px solid #59636f; }

.vm-status { display: flex; align-items: center; justify-content: flex-end; gap: 3px; height: 20px; padding-right: 2px; font: 11px/18px Roboto, "Open Sans", sans-serif; white-space: nowrap; }
.vm-status span { min-width: 75px; }
.host-bar { display: flex; height: 40px; background: linear-gradient(90deg, #20353e, #1f3240 55%, #182542 80%, #172341); color: #fff; }
.start { width: 42px; padding-right: 6px; display: grid; place-items: center; }
.host-search { width: 288px; }
.desk-art { width: 79px; height: 38px; }
.tasks { display: flex; }
.tasks-a { gap: 2px; margin: 0 1px 0 3px; }
.tasks-c { gap: 1px; }
.task { display: flex; align-items: center; width: 92px; padding-left: 6px; gap: 5px; font-size: 11px; }
.pin { width: 43px; display: grid; place-items: center; }
```
